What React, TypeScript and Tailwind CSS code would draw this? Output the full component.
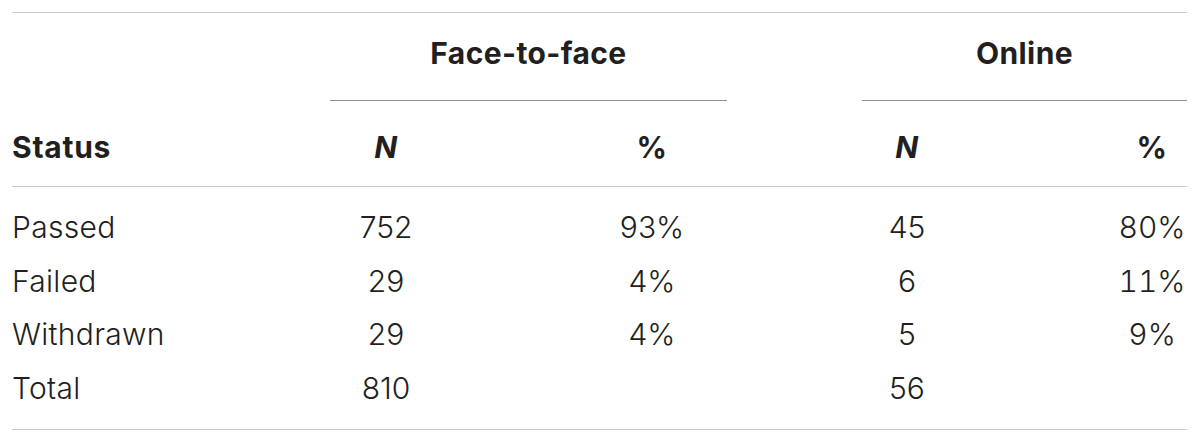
const rows = [
  { status: 'Passed', fn: '752', fp: '93%', on: '45', op: '80%' },
  { status: 'Failed', fn: '29', fp: '4%', on: '6', op: '11%' },
  { status: 'Withdrawn', fn: '29', fp: '4%', on: '5', op: '9%' },
  { status: 'Total', fn: '810', fp: '', on: '56', op: '' },
];

const cols = 'grid grid-cols-[318px_112px_420px_90px_165px_70px]';

export default function App() {
  return (
    <div
      className="w-[1200px] h-[443px] bg-white pt-[12px] pl-[12px] text-[#231f20]"
      style={{ fontFamily: 'Inter, "Liberation Sans", sans-serif' }}
    >
      <div className="w-[1175px] border-t border-b border-[#cbcbcb]">
        {/* group headers */}
        <div className={`${cols} h-[88px] tracking-[0.025em]`}>
          <div />
          <div className="col-span-2 flex">
            <div className="w-[397px] border-b border-[#8e8e8e] pt-[25px] text-center text-[30px] leading-[30px] font-bold">
              Face-to-face
            </div>
          </div>
          <div className="col-span-3 border-b border-[#8e8e8e] pt-[25px] text-center text-[30px] leading-[30px] font-bold">
            Online
          </div>
        </div>

        {/* column headers */}
        <div className={`${cols} h-[86px] border-b border-[#cbcbcb] pt-[31px] text-[30px] leading-[30px] font-bold tracking-[0.025em]`}>
          <div>Status</div>
          <div className="text-center italic">N</div>
          <div className="text-center">%</div>
          <div className="text-center italic">N</div>
          <div />
          <div className="text-center">%</div>
        </div>

        {/* data */}
        <div className="py-[14px] text-[30px] font-light">
          {rows.map((r) => (
            <div key={r.status} className={`${cols} h-[53.5px] leading-[53.5px]`}>
              <div className="tracking-[0.01em]">{r.status}</div>
              <div className="text-center">{r.fn}</div>
              <div className="text-center">{r.fp}</div>
              <div className="text-center">{r.on}</div>
              <div />
              <div className="text-center tabular-nums">{r.op}</div>
            </div>
          ))}
        </div>
      </div>
    </div>
  );
}
